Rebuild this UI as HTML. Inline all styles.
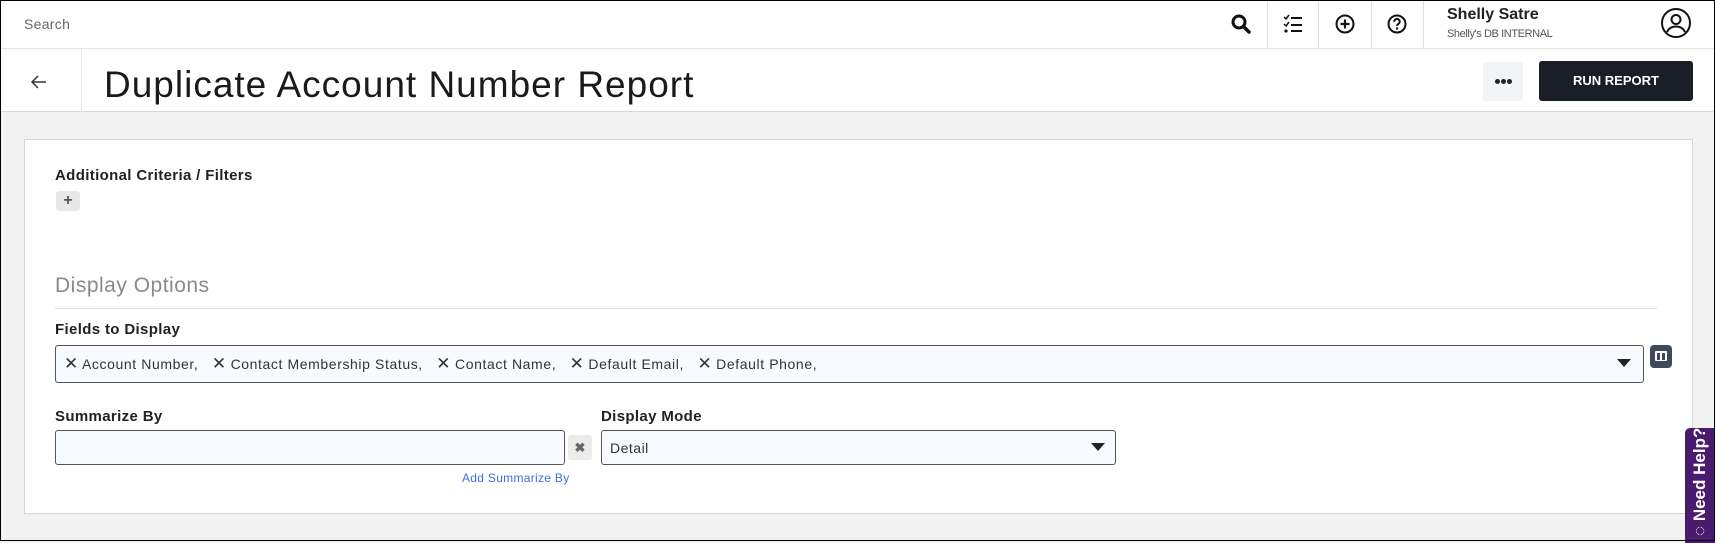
<!DOCTYPE html>
<html><head><meta charset="utf-8">
<style>
*{box-sizing:border-box;margin:0;padding:0}
body{width:1715px;height:541px;overflow:hidden;font-family:"Liberation Sans",sans-serif;color:#1a1a1a;background:#f2f2f2;position:relative}
.frame{position:absolute;left:0;top:0;width:1715px;height:541px;border:1px solid #000;pointer-events:none;z-index:10}
.abs{position:absolute}
.top{left:0;top:0;width:1715px;height:49px;background:#fff;border-bottom:1px solid #e2e2e2}
.sep{top:0;width:1px;height:48px;background:#dedede}
.hdr{left:0;top:49px;width:1715px;height:63px;background:#fff;border-bottom:1px solid #d8d8d8}
.lbl{font-size:15px;font-weight:bold;color:#222;letter-spacing:0.35px}
.inp{background:#f7faff;border:1px solid #555;border-radius:3px}
.x{font-size:17px;letter-spacing:0}
</style></head><body>
<div class="abs top"></div>
<div class="abs" style="left:24px;top:16px;font-size:14px;color:#666;letter-spacing:0.3px">Search</div>
<svg class="abs" style="left:1230px;top:13px" width="22" height="22" viewBox="0 0 22 22"><circle cx="9" cy="9" r="6" fill="none" stroke="#111" stroke-width="3"/><path d="M13.5 13.5L19 19" stroke="#111" stroke-width="3.5" stroke-linecap="round"/></svg>
<div class="abs sep" style="left:1267px"></div>
<svg class="abs" style="left:1282px;top:13px" width="22" height="22" viewBox="0 0 22 22"><path d="M2 4l2 2 3-4M2 11l2 2 3-4" stroke="#111" stroke-width="1.5" fill="none"/><circle cx="4" cy="18" r="1.6" fill="#111"/><path d="M9 5h11M9 12h11M9 18h11" stroke="#111" stroke-width="2"/></svg>
<div class="abs sep" style="left:1318px"></div>
<svg class="abs" style="left:1334px;top:13px" width="22" height="22" viewBox="0 0 22 22"><circle cx="11" cy="11" r="8.5" fill="none" stroke="#111" stroke-width="2"/><path d="M11 6.5v9M6.5 11h9" stroke="#111" stroke-width="2.2"/></svg>
<div class="abs sep" style="left:1371px"></div>
<svg class="abs" style="left:1386px;top:13px" width="22" height="22" viewBox="0 0 22 22"><circle cx="11" cy="11" r="8.5" fill="none" stroke="#111" stroke-width="2"/><path d="M8.3 8.8a2.7 2.7 0 1 1 3.8 2.3c-.8.4-1.1.9-1.1 1.8" stroke="#111" stroke-width="2" fill="none"/><circle cx="11" cy="15.5" r="1.2" fill="#111"/></svg>
<div class="abs sep" style="left:1423px"></div>
<div class="abs" style="left:1447px;top:6px;font-size:16px;font-weight:bold;color:#222">Shelly Satre</div>
<div class="abs" style="left:1447px;top:28px;font-size:11px;color:#555;letter-spacing:-0.4px">Shelly's DB INTERNAL</div>
<svg class="abs" style="left:1660px;top:7px" width="32" height="32" viewBox="0 0 32 32"><circle cx="16" cy="16" r="14" fill="none" stroke="#111" stroke-width="2"/><circle cx="16" cy="12.5" r="4.5" fill="none" stroke="#111" stroke-width="2"/><path d="M7 25c2-4 5.5-5.5 9-5.5s7 1.5 9 5.5" fill="none" stroke="#111" stroke-width="2"/></svg>

<div class="abs hdr"></div>
<div class="abs" style="left:81px;top:49px;width:1px;height:63px;background:#e8e8e8"></div>
<svg class="abs" style="left:30px;top:74px" width="18" height="16" viewBox="0 0 18 16"><path d="M16 8H3M8 2L2 8l6 6" stroke="#333" stroke-width="1.5" fill="none"/></svg>
<div class="abs" style="left:104px;top:64px;font-size:37px;color:#1a1a1a;letter-spacing:1.0px">Duplicate Account Number Report</div>
<div class="abs" style="left:1483px;top:62px;width:40px;height:39px;background:#f2f4f7;border-radius:3px"></div>
<div class="abs" style="left:1495px;top:79px;width:5px;height:5px;border-radius:50%;background:#222"></div>
<div class="abs" style="left:1501px;top:79px;width:5px;height:5px;border-radius:50%;background:#222"></div>
<div class="abs" style="left:1507px;top:79px;width:5px;height:5px;border-radius:50%;background:#222"></div>
<div class="abs" style="left:1539px;top:61px;width:154px;height:40px;background:#1a1e27;border-radius:3px;color:#fff;font-size:13px;font-weight:bold;text-align:center;line-height:40px">RUN REPORT</div>

<div class="abs" style="left:24px;top:139px;width:1669px;height:375px;background:#fff;border:1px solid #d6d6d6"></div>
<div class="abs lbl" style="left:55px;top:167px">Additional Criteria / Filters</div>
<div class="abs" style="left:56px;top:191px;width:24px;height:20px;background:#e8e8e8;border-radius:3px;text-align:center;font-size:16px;line-height:20px;font-weight:bold;color:#555">+</div>
<div class="abs" style="left:55px;top:274px;font-size:21px;color:#8a8a8a;letter-spacing:0.5px">Display Options</div>
<div class="abs" style="left:55px;top:308px;width:1602px;height:1px;background:#e0dcf0"></div>
<div class="abs lbl" style="left:55px;top:321px">Fields to Display</div>
<div class="abs inp" style="left:55px;top:345px;width:1589px;height:38px"></div>
<div class="abs" style="left:64px;top:354px;font-size:14px;color:#333;white-space:pre;letter-spacing:0.6px"><span class="x">✕</span> Account Number,   <span class="x">✕</span> Contact Membership Status,   <span class="x">✕</span> Contact Name,   <span class="x">✕</span> Default Email,   <span class="x">✕</span> Default Phone,</div>
<svg class="abs" style="left:1617px;top:359px" width="14" height="9"><path d="M0 0h14L7 8z" fill="#222"/></svg>
<div class="abs" style="left:1650px;top:345px;width:22px;height:23px;background:#3d4a5c;border-radius:4px"></div>
<div class="abs" style="left:1655px;top:351px;width:12px;height:10px;background:#fff;border-radius:1px"></div>
<div class="abs" style="left:1657px;top:353px;width:3px;height:7px;background:#3d4a5c"></div>
<div class="abs" style="left:1662px;top:353px;width:3px;height:7px;background:#3d4a5c"></div>

<div class="abs lbl" style="left:55px;top:408px">Summarize By</div>
<div class="abs inp" style="left:55px;top:430px;width:510px;height:35px"></div>
<div class="abs" style="left:568px;top:435px;width:24px;height:25px;background:#ececec;border-radius:3px;text-align:center;line-height:25px;font-size:13px;font-weight:bold;color:#666">✖</div>
<div class="abs" style="left:462px;top:471px;font-size:12px;color:#3b6fe0;letter-spacing:0.3px">Add Summarize By</div>
<div class="abs lbl" style="left:601px;top:408px">Display Mode</div>
<div class="abs inp" style="left:601px;top:430px;width:515px;height:35px"></div>
<div class="abs" style="left:610px;top:440px;font-size:14px;color:#333;letter-spacing:0.5px">Detail</div>
<svg class="abs" style="left:1091px;top:443px" width="14" height="9"><path d="M0 0h14L7 8z" fill="#222"/></svg>

<div class="abs" style="left:1685px;top:428px;width:32px;height:115px;background:#4a1a6e;border-radius:5px 0 0 0"></div>
<div class="abs" style="left:1689px;top:536px;transform:rotate(-90deg);transform-origin:0 0;color:#fff;font-weight:bold;font-size:17px;white-space:nowrap;line-height:22px">◌ Need Help?</div>
<div class="frame"></div>
</body></html>
